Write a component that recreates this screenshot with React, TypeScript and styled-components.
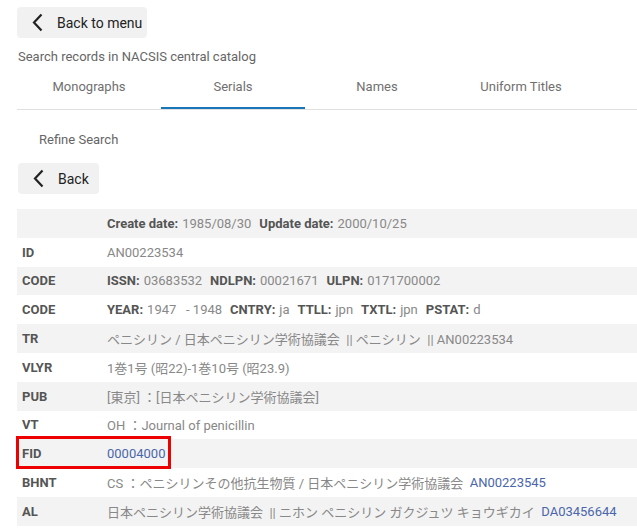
import React from "react";
import styled, { createGlobalStyle } from "styled-components";

const Global = createGlobalStyle`
  html, body { margin: 0; padding: 0; background: #fff; }
  body { font-family: Roboto, "Noto Sans CJK JP", sans-serif; font-size: 13px; color: #555; }
`;

const Page = styled.div`
  padding-left: 17px;
  padding-top: 7px;
  width: 620px;
  overflow: hidden;
`;

const BackButton = styled.button<{ $w: number }>`
  display: flex;
  align-items: center;
  gap: 14px;
  width: ${(p) => p.$w}px;
  height: 31px;
  padding: 0 0 0 15px;
  border: none;
  border-radius: 4px;
  background: #f1f1f1;
  color: #222;
  font-family: Roboto, sans-serif;
  font-size: 14px;
  cursor: pointer;
`;

const Subtitle = styled.div`
  margin-top: 11px;
  margin-left: 1px;
  line-height: 16px;
  color: #666;
`;

const Tabs = styled.div`
  display: flex;
  margin-top: 4px;
  border-bottom: 1px solid #e0e0e0;
  width: 640px;
`;

const Tab = styled.div<{ $active?: boolean }>`
  width: 144px;
  height: 40px;
  display: flex;
  align-items: center;
  justify-content: center;
  color: #707070;
  font-weight: 400;
  font-size: 13px;
  box-sizing: border-box;
  padding-bottom: 4px;
  border-bottom: 2px solid ${(p) => (p.$active ? "#1a75b9" : "transparent")};
`;

const Refine = styled.div`
  margin: 22px 0 0 22px;
  line-height: 16px;
  color: #666;
`;

const BackWrap = styled.div`
  margin-top: 15px;
  margin-left: 1px;
`;

const Table = styled.div`
  margin-top: 15px;
  width: 640px;
`;

const Row = styled.div`
  position: relative;
  display: flex;
  align-items: center;
  height: 28.8px;
  &:nth-child(odd) {
    background: #f3f3f3;
  }
`;

const Label = styled.div`
  width: 85px;
  padding-left: 5px;
  font-weight: 700;
  color: #555;
  flex: none;
`;

const Value = styled.div`
  display: flex;
  align-items: center;
  white-space: nowrap;
  color: #888;
`;

const Key = styled.span`
  font-weight: 700;
  color: #555;
  margin-right: 4px;
`;

const Pair = styled.span`
  margin-right: 8px;
`;

const Link = styled.span`
  color: #4a66aa;
`;

const Highlight = styled.div`
  position: absolute;
  left: -1px;
  top: -3px;
  width: 149px;
  height: 27px;
  border: 3px solid #ee0000;
  pointer-events: none;
`;

const Chevron = () => (
  <svg width="11" height="19" viewBox="0 0 11 19">
    <polyline points="9.5,1.5 2,9.5 9.5,17.5" fill="none" stroke="#222" strokeWidth="2.2" />
  </svg>
);

const pairs = (items: [string, string][]) =>
  items.map(([k, v]) => (
    <Pair key={k}>
      <Key>{k}:</Key>
      {v}
    </Pair>
  ));

export default function App() {
  return (
    <>
      <Global />
      <Page>
        <BackButton $w={130}>
          <Chevron />
          <span>Back to menu</span>
        </BackButton>
        <Subtitle>Search records in NACSIS central catalog</Subtitle>
        <Tabs>
          <Tab>Monographs</Tab>
          <Tab $active>Serials</Tab>
          <Tab>Names</Tab>
          <Tab>Uniform Titles</Tab>
        </Tabs>
        <Refine>Refine Search</Refine>
        <BackWrap>
          <BackButton $w={81}>
            <Chevron />
            <span>Back</span>
          </BackButton>
        </BackWrap>
        <Table>
          <Row>
            <Label></Label>
            <Value>{pairs([["Create date", "1985/08/30"], ["Update date", "2000/10/25"]])}</Value>
          </Row>
          <Row>
            <Label>ID</Label>
            <Value>AN00223534</Value>
          </Row>
          <Row>
            <Label>CODE</Label>
            <Value>{pairs([["ISSN", "03683532"], ["NDLPN", "00021671"], ["ULPN", "0171700002"]])}</Value>
          </Row>
          <Row>
            <Label>CODE</Label>
            <Value>
              {pairs([["YEAR", "1947\u00a0\u00a0 - 1948"], ["CNTRY", "ja"], ["TTLL", "jpn"], ["TXTL", "jpn"], ["PSTAT", "d"]])}
            </Value>
          </Row>
          <Row>
            <Label>TR</Label>
            <Value>ペニシリン / 日本ペニシリン学術協議会 &nbsp;|| ペニシリン &nbsp;|| AN00223534</Value>
          </Row>
          <Row>
            <Label>VLYR</Label>
            <Value>1巻1号 (昭22)-1巻10号 (昭23.9)</Value>
          </Row>
          <Row>
            <Label>PUB</Label>
            <Value>[東京] ：[日本ペニシリン学術協議会]</Value>
          </Row>
          <Row>
            <Label>VT</Label>
            <Value>OH ：Journal of penicillin</Value>
          </Row>
          <Row>
            <Label>FID</Label>
            <Value>
              <Link>00004000</Link>
            </Value>
            <Highlight />
          </Row>
          <Row>
            <Label>BHNT</Label>
            <Value>
              CS ：ペニシリンその他抗生物質 / 日本ペニシリン学術協議会 &nbsp;<Link>AN00223545</Link>
            </Value>
          </Row>
          <Row>
            <Label>AL</Label>
            <Value>
              日本ペニシリン学術協議会 &nbsp;|| ニホン ペニシリン ガクジュツ キョウギカイ &nbsp;<Link>DA03456644</Link>
            </Value>
          </Row>
        </Table>
      </Page>
    </>
  );
}
